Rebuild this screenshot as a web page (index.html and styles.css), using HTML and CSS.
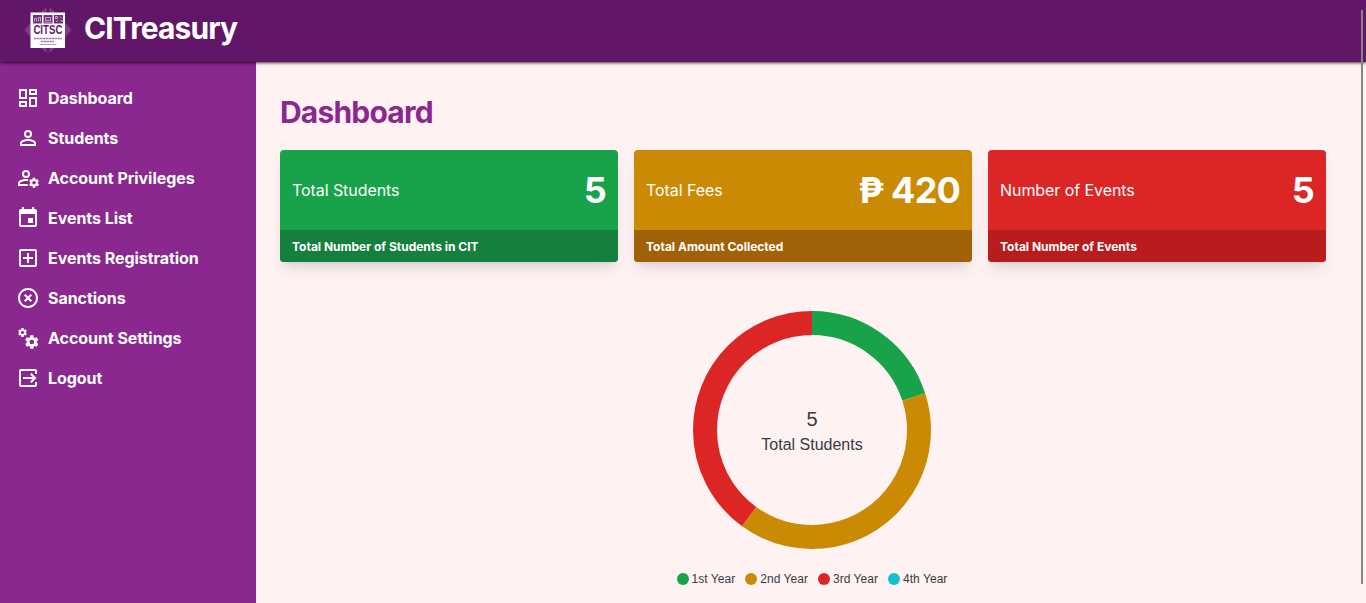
FILE: index.html
```html
<!DOCTYPE html>
<html lang="en">
<head>
<meta charset="utf-8">
<title>CITreasury</title>
<link rel="stylesheet" href="styles.css">
</head>
<body>
<svg class="defs" aria-hidden="true">
  <symbol id="gear" viewBox="0 0 24 24"><path d="M12,15.5A3.5,3.5 0 0,1 8.5,12A3.5,3.5 0 0,1 12,8.5A3.5,3.5 0 0,1 15.5,12A3.5,3.5 0 0,1 12,15.5M19.43,12.97C19.47,12.65 19.5,12.33 19.5,12C19.5,11.67 19.47,11.34 19.43,11L21.54,9.37C21.73,9.22 21.78,8.95 21.66,8.73L19.66,5.27C19.54,5.05 19.27,4.96 19.05,5.05L16.56,6.05C16.04,5.66 15.5,5.32 14.87,5.07L14.5,2.42C14.46,2.18 14.25,2 14,2H10C9.75,2 9.54,2.18 9.5,2.42L9.13,5.07C8.5,5.32 7.96,5.66 7.44,6.05L4.95,5.05C4.73,4.96 4.46,5.05 4.34,5.27L2.34,8.73C2.21,8.95 2.27,9.22 2.46,9.37L4.57,11C4.53,11.34 4.5,11.67 4.5,12C4.5,12.33 4.53,12.65 4.57,12.97L2.46,14.63C2.27,14.78 2.21,15.05 2.34,15.27L4.34,18.73C4.46,18.95 4.73,19.03 4.95,18.95L7.44,17.94C7.96,18.34 8.5,18.68 9.13,18.93L9.5,21.58C9.54,21.82 9.75,22 10,22H14C14.25,22 14.46,21.82 14.5,21.58L14.87,18.93C15.5,18.67 16.04,18.34 16.56,17.94L19.05,18.95C19.27,19.03 19.54,18.95 19.66,18.73L21.66,15.27C21.78,15.05 21.73,14.78 21.54,14.63L19.43,12.97Z"/></symbol>
</svg>
<header class="topbar">
  <svg class="logo" viewBox="0 0 48 48">
    <path class="logo-diamond" d="M22.500 1v46L14 39H8v-6L0.500 24 8 15V9h6zM25.500 1v46l8.500-8h6v-6l7.500-9L40 15V9h-6z"/>
    <rect class="logo-paper" x="6.500" y="6.500" width="34.500" height="35.500"/>
    <g class="logo-ink">
      <path d="M9 9h9v8.500H9zM19.500 9h9v8.500h-9zM30 9h9v8.500h-9z"/>
      <path class="logo-lines" d="M10.500 15.500v-3h2v3M14.500 15.500v-4h2v4M21.500 11.500h5v3h-5zM20.500 16.300h7M31.500 10.500h2v2h-2zM36 10.500l2 2M32 16l2-2M36.500 14.500h1.500v1.500"/>
      <path class="logo-rules" d="M10 32.500h28M17 35.500h13"/>
      <path class="logo-underline" d="M15.500 38.500h17"/>
    </g>
    <text class="logo-text" x="23.900" y="28.200" text-anchor="middle" textLength="29" lengthAdjust="spacingAndGlyphs">CITSC</text>
  </svg>
  <div class="brand">CITreasury</div>
</header>
<div class="shell">
  <nav class="sidebar">
    <a class="item"><svg class="icon" viewBox="0 0 24 24"><path d="M19,5V7H15V5H19M9,5V11H5V5H9M19,13V19H15V13H19M9,17V19H5V17H9M21,3H13V9H21V3M11,3H3V13H11V3M21,11H13V21H21V11M11,15H3V21H11V15Z"/></svg>Dashboard</a>
    <a class="item"><svg class="icon" viewBox="0 0 24 24"><path d="M12,4A4,4 0 0,1 16,8A4,4 0 0,1 12,12A4,4 0 0,1 8,8A4,4 0 0,1 12,4M12,6A2,2 0 0,0 10,8A2,2 0 0,0 12,10A2,2 0 0,0 14,8A2,2 0 0,0 12,6M12,13C14.67,13 20,14.33 20,17V20H4V17C4,14.33 9.33,13 12,13M12,14.9C9.03,14.9 5.9,16.36 5.9,17V18.1H18.1V17C18.1,16.36 14.97,14.9 12,14.9Z"/></svg>Students</a>
    <a class="item"><svg class="icon" viewBox="0 0 24 24"><path d="M10,4A4,4 0 0,1 14,8A4,4 0 0,1 10,12A4,4 0 0,1 6,8A4,4 0 0,1 10,4M10,6A2,2 0 0,0 8,8A2,2 0 0,0 10,10A2,2 0 0,0 12,8A2,2 0 0,0 10,6M10,13C10.700,13 11.600,13.100 12.500,13.300L11.800,15.050C11.200,14.950 10.600,14.900 10,14.900C7.030,14.900 3.900,16.360 3.900,17V18.100H11.500L12.200,20H2V17C2,14.330 7.330,13 10,13Z"/><use href="#gear" x="12" y="10.800" width="12" height="12"/></svg>Account Privileges</a>
    <a class="item"><svg class="icon" viewBox="0 0 24 24"><path d="M19,19H5V8H19M16,1V3H8V1H6V3H5C3.890,3 3,3.890 3,5V19A2,2 0 0,0 5,21H19A2,2 0 0,0 21,19V5C21,3.890 20.100,3 19,3H18V1M17,12H12V17H17V12Z"/></svg>Events List</a>
    <a class="item"><svg class="icon" viewBox="0 0 24 24"><path d="M19,19V5H5V19H19M19,3A2,2 0 0,1 21,5V19A2,2 0 0,1 19,21H5A2,2 0 0,1 3,19V5C3,3.890 3.900,3 5,3H19M11,7H13V11H17V13H13V17H11V13H7V11H11V7Z"/></svg>Events Registration</a>
    <a class="item"><svg class="icon" viewBox="0 0 24 24"><path d="M12,20C7.590,20 4,16.410 4,12C4,7.590 7.590,4 12,4C16.410,4 20,7.590 20,12C20,16.410 16.410,20 12,20M12,2C6.470,2 2,6.470 2,12C2,17.530 6.470,22 12,22C17.530,22 22,17.530 22,12C22,6.470 17.530,2 12,2M14.590,8L12,10.590L9.410,8L8,9.410L10.590,12L8,14.590L9.410,16L12,13.410L14.590,16L16,14.590L13.410,12L16,9.410L14.590,8Z"/></svg>Sanctions</a>
    <a class="item"><svg class="icon" viewBox="0 0 24 24"><use href="#gear" x="1.200" y="1.200" width="10.600" height="10.600"/><use href="#gear" x="7.800" y="8" width="16" height="16"/></svg>Account Settings</a>
    <a class="item"><svg class="icon" viewBox="0 0 24 24"><path d="M19,3H5C3.890,3 3,3.890 3,5V19A2,2 0 0,0 5,21H19A2,2 0 0,0 21,19V16H19V19H5V5H19V8H21V5C21,3.890 20.100,3 19,3M14.080,15.580L15.500,17L20.500,12L15.500,7L14.080,8.410L16.670,11H7V13H16.670L14.080,15.580Z"/></svg>Logout</a>
  </nav>
  <main class="content">
    <h1 class="title">Dashboard</h1>
    <div class="cards">
      <section class="card green"><div class="card-body"><span class="name">Total Students</span><b class="value">5</b></div><div class="card-foot">Total Number of Students in CIT</div></section>
      <section class="card yellow"><div class="card-body"><span class="name">Total Fees</span><b class="value">₱ 420</b></div><div class="card-foot">Total Amount Collected</div></section>
      <section class="card red"><div class="card-body"><span class="name">Number of Events</span><b class="value">5</b></div><div class="card-foot">Total Number of Events</div></section>
    </div>
    <div class="chart">
      <svg class="donut" viewBox="-120 -120 240 240">
        <g class="ring">
          <circle class="arc-green" r="107" pathLength="100" stroke-dasharray="20 80"/>
          <circle class="arc-yellow" r="107" pathLength="100" stroke-dasharray="40 60" stroke-dashoffset="-20"/>
          <circle class="arc-red" r="107" pathLength="100" stroke-dasharray="40 60" stroke-dashoffset="-60"/>
        </g>
        <text class="count" y="-4" text-anchor="middle">5</text>
        <text class="count-label" y="20" text-anchor="middle">Total Students</text>
      </svg>
      <div class="legend">
        <span class="key"><i class="dot dot-green"></i>1st Year</span>
        <span class="key"><i class="dot dot-yellow"></i>2nd Year</span>
        <span class="key"><i class="dot dot-red"></i>3rd Year</span>
        <span class="key"><i class="dot dot-cyan"></i>4th Year</span>
      </div>
    </div>
  </main>
</div>
<div class="scroll-thumb"></div>
</body>
</html>
```
FILE: styles.css
```css
* { box-sizing: border-box; }
body {
  margin: 0;
  height: 603px;
  overflow: hidden;
  display: flex;
  flex-direction: column;
  background: #fef2f2;
  font: 16px/24px Inter, sans-serif;
}
.defs { position: absolute; width: 0; height: 0; }
.topbar {
  position: relative;
  z-index: 1;
  flex: none;
  height: 62px;
  padding: 6px 24px 0;
  display: flex;
  align-items: flex-start;
  gap: 12px;
  background: #611668;
  box-shadow: 0 1px 3px #000000c8;
}
.logo { width: 48px; height: 48px; }
.logo-diamond { fill: #7d3a86; }
.logo-paper { fill: #fff; }
.logo-ink { fill: #73307b; }
.logo-lines { fill: none; stroke: #d8c2dc; stroke-width: .8; }
.logo-rules { fill: none; stroke: #a57cab; stroke-width: 1.4; stroke-dasharray: 2.6 .4; }
.logo-underline { fill: none; stroke: #a57cab; stroke-width: .8; }
.logo-text { fill: #611668; font: bold 12px "Liberation Sans", sans-serif; }
.brand { color: #fff; font-size: 30px; font-weight: 700; line-height: 36px; letter-spacing: -0.9px; margin-top: 4px; }
.shell { flex: 1; display: flex; min-height: 0; }
.sidebar {
  width: 256px;
  padding: 24px 16px;
  display: flex;
  flex-direction: column;
  gap: 16px;
  background: #8a288f;
}
.item { display: flex; align-items: center; gap: 8px; color: #fff; font-weight: 700; letter-spacing: -0.05px; }
.icon { width: 24px; height: 24px; fill: currentColor; }
.content { flex: 1; padding: 32px 40px 0 24px; }
.title { margin: 0 0 20px; color: #8a288f; font-size: 30px; font-weight: 700; line-height: 36px; letter-spacing: -0.8px; }
.cards { display: grid; grid-template-columns: repeat(3, 1fr); gap: 16px; }
.card {
  color: #fff;
  border-radius: 4px;
  box-shadow: 0 10px 15px -3px #0000001a, 0 4px 6px -4px #0000001a;
}
.card-body { height: 80px; padding: 0 12px; display: flex; align-items: center; justify-content: space-between; }
.name { letter-spacing: -0.07px; }
.value { font-size: 36px; line-height: 40px; font-weight: 700; letter-spacing: -0.8px; }
.card-foot { height: 32px; padding: 1px 12px 0; font-size: 12px; line-height: 32px; font-weight: 700; border-radius: 0 0 4px 4px; }
.green { background: #18a34a; }
.green .card-foot { background: #15803d; }
.yellow { background: #ca8a04; }
.yellow .card-foot { background: #a16207; }
.red { background: #dc2626; }
.red .card-foot { background: #b91c1c; }
.chart { margin-top: 48px; padding-left: 18px; display: flex; flex-direction: column; align-items: center; font-family: "Liberation Sans", Arial, sans-serif; }
.donut { width: 240px; height: 240px; }
.ring { transform: rotate(-90deg); fill: none; stroke-width: 24; }
.arc-green { stroke: #18a34a; }
.arc-yellow { stroke: #ca8a04; }
.arc-red { stroke: #dc2626; }
.count { font-size: 20px; fill: #373d3f; }
.count-label { font-size: 16px; fill: #373d3f; }
.legend { display: flex; gap: 10px; margin-top: 20px; font-size: 12px; line-height: 18px; letter-spacing: 0.04px; color: #373d3f; }
.key { display: flex; align-items: center; gap: 3px; }
.dot { width: 12px; height: 12px; border-radius: 50%; }
.dot-green { background: #18a34a; }
.dot-yellow { background: #ca8a04; }
.dot-red { background: #dc2626; }
.dot-cyan { background: #17bed0; }
.scroll-thumb { position: absolute; z-index: 2; right: 3px; top: 10px; width: 2px; height: 574px; background: #858585; }
```
